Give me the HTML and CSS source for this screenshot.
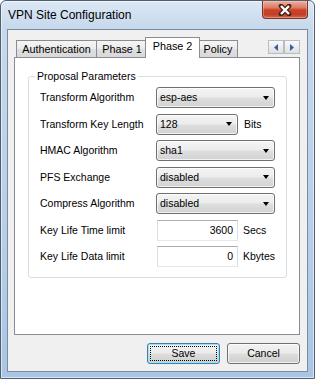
FILE: index.html
```html
<!DOCTYPE html>
<html>
<head>
<meta charset="utf-8">
<title>VPN Site Configuration</title>
<link rel="stylesheet" href="styles.css">
</head>
<body>
<div class="window">
  <div class="titlebar">
    <span class="title">VPN Site Configuration</span>
    <div class="close">
      <svg width="14" height="12" viewBox="0 0 14 12"><path d="M3 2 L11 10 M11 2 L3 10" stroke="#4a2018" stroke-width="4.6" stroke-linecap="round" fill="none"/><path d="M3 2 L11 10 M11 2 L3 10" stroke="#ffffff" stroke-width="2.4" fill="none"/></svg>
    </div>
  </div>
  <div class="client">
    <div class="tabs">
      <div class="tab t-auth">Authentication</div>
      <div class="tab t-p1">Phase 1</div>
      <div class="tab active t-p2">Phase 2</div>
      <div class="tab t-pol">Policy</div>
      <div class="scroller">
        <span class="sbtn"><svg width="4" height="7" viewBox="0 0 4 7"><path d="M4 0 L0 3.5 L4 7 Z" fill="#3a5aa8"/></svg></span>
        <span class="sbtn"><svg width="4" height="7" viewBox="0 0 4 7"><path d="M0 0 L4 3.5 L0 7 Z" fill="#3a5aa8"/></svg></span>
      </div>
    </div>
    <div class="panel">
      <fieldset class="group">
        <legend>Proposal Parameters</legend>
        <div class="grid">
          <span class="lbl">Transform Algorithm</span>
          <div class="ctl"><div class="combo wide"><span>esp-aes</span><i class="arrow"></i></div></div>

          <span class="lbl">Transform Key Length</span>
          <div class="ctl"><div class="combo narrow"><span>128</span><i class="arrow"></i></div><span class="unit u-bits">Bits</span></div>

          <span class="lbl">HMAC Algorithm</span>
          <div class="ctl"><div class="combo wide"><span>sha1</span><i class="arrow"></i></div></div>

          <span class="lbl">PFS Exchange</span>
          <div class="ctl"><div class="combo wide"><span>disabled</span><i class="arrow"></i></div></div>

          <span class="lbl">Compress Algorithm</span>
          <div class="ctl"><div class="combo wide"><span>disabled</span><i class="arrow"></i></div></div>

          <span class="lbl">Key Life Time limit</span>
          <div class="ctl"><div class="edit">3600</div><span class="unit">Secs</span></div>

          <span class="lbl">Key Life Data limit</span>
          <div class="ctl"><div class="edit">0</div><span class="unit">Kbytes</span></div>
        </div>
      </fieldset>
    </div>
    <div class="buttons">
      <button class="btn default">Save</button>
      <button class="btn">Cancel</button>
    </div>
  </div>
</div>
</body>
</html>
```
FILE: styles.css
```css
html, body {
  margin: 0;
  padding: 0;
}
body {
  width: 315px;
  height: 379px;
  overflow: hidden;
  background: #ffffff;
  font-family: "Liberation Sans", Arial, sans-serif;
  font-size: 10.5px;
  color: #000;
}
.window {
  box-sizing: border-box;
  width: 315px;
  height: 379px;
  border: 1px solid #4f5f70;
  border-radius: 6px 6px 0 0;
  background: linear-gradient(180deg, #dbe8f5 0px, #c6d8ec 28px, #b8cfe9 60%, #a9c5e5 100%);
  box-shadow: inset 0 0 0 1px rgba(255, 255, 255, 0.55);
  padding: 0 6px 6px 6px;
  display: flex;
  flex-direction: column;
}
.titlebar {
  height: 28px;
  flex: 0 0 28px;
  display: flex;
  align-items: flex-start;
  padding-left: 1px;
}
.title {
  font-size: 12px;
  line-height: 14px;
  padding-top: 7px;
  color: #000;
}
.close {
  margin-left: auto;
  width: 46px;
  height: 18px;
  box-sizing: border-box;
  border: 1px solid #7a3324;
  border-top: none;
  border-radius: 0 0 4px 4px;
  background: linear-gradient(180deg, #ecb0a0 0%, #dd7a63 40%, #c8432a 52%, #c23f26 80%, #d66a52 100%);
  box-shadow: inset 0 0 0 1px rgba(255, 220, 210, 0.35);
  display: flex;
  align-items: center;
  justify-content: center;
}
.client {
  box-sizing: border-box;
  height: 343px;
  flex: 0 0 343px;
  border: 1px solid #7b8ca0;
  background: #f0f0f0;
  display: flex;
  flex-direction: column;
}
.tabs {
  height: 20px;
  margin: 7px 7px 0 6px;
  padding-left: 2px;
  display: flex;
  align-items: flex-end;
}
.tab {
  box-sizing: border-box;
  height: 17px;
  border: 1px solid #898c95;
  border-bottom: none;
  background: linear-gradient(180deg, #f5f5f5 0%, #ebebeb 50%, #dfdfdf 51%, #d9d9d9 100%);
  display: flex;
  align-items: center;
  justify-content: center;
  font-size: 10.8px;
  line-height: 13px;
  padding-top: 1px;
}
.t-auth { width: 81px; }
.t-p1 { width: 52px; margin-left: -1px; }
.t-p2 { width: 55px; margin-left: -3px; }
.t-pol { width: 40px; margin-left: -2px; }
.tab.active {
  height: 21px;
  margin-bottom: -1px;
  background: #ffffff;
  z-index: 1;
  padding-top: 0;
  padding-bottom: 4px;
}
.scroller {
  margin-left: auto;
  align-self: flex-start;
  margin-top: 3px;
  display: flex;
}
.sbtn {
  box-sizing: border-box;
  width: 16px;
  height: 14px;
  border: 1px solid #b9bcc2;
  background: linear-gradient(180deg, #fafafa 0%, #ececec 50%, #e0e0e0 100%);
  display: flex;
  align-items: center;
  justify-content: center;
}
.panel {
  box-sizing: border-box;
  height: 278px;
  margin: 0 7px 0 6px;
  border: 1px solid #898c95;
  background: #ffffff;
  display: flex;
  flex-direction: column;
}
.group {
  margin: 12px 12px 0 13px;
  padding: 0 11px 10px 11px;
  border: 1px solid #d5dfe5;
  border-radius: 3px;
  min-width: 0;
}
.group legend {
  padding: 0 2px;
  margin-left: -5px;
  line-height: 13px;
}
.grid {
  margin-top: 4px;
  display: grid;
  grid-template-columns: 116px 1fr;
  grid-auto-rows: 21px;
  row-gap: 5.5px;
  align-items: center;
}
.lbl {
  line-height: 13px;
}
.ctl {
  display: flex;
  align-items: center;
  height: 21px;
}
.combo {
  box-sizing: border-box;
  height: 21px;
  border: 1px solid #707070;
  border-radius: 3px;
  background: linear-gradient(180deg, #f4f4f4 0%, #ececec 48%, #dedede 52%, #d2d2d2 100%);
  box-shadow: inset 0 0 0 1px rgba(255, 255, 255, 0.7);
  display: flex;
  align-items: center;
  justify-content: space-between;
  padding: 0 5px 0 3px;
  line-height: 13px;
}
.combo.wide { width: 119px; }
.combo.narrow { width: 82px; }
.arrow {
  width: 0;
  height: 0;
  border-left: 3.5px solid transparent;
  border-right: 3.5px solid transparent;
  border-top: 4px solid #000;
}
.unit {
  margin-left: 5px;
  line-height: 13px;
}
.u-bits { margin-left: 6px; }
.edit {
  box-sizing: border-box;
  width: 81px;
  height: 21px;
  margin-left: 1px;
  border: 1px solid #e2e3ea;
  border-top-color: #abadb3;
  border-left-color: #dbdfe6;
  border-right-color: #dbdfe6;
  border-bottom-color: #e3e9ef;
  background: #ffffff;
  text-align: right;
  padding-right: 4px;
  line-height: 19px;
}
.buttons {
  margin: 8px 7px 0 0;
  display: flex;
  justify-content: flex-end;
  gap: 7px;
}
.btn {
  box-sizing: border-box;
  width: 73px;
  height: 21px;
  margin: 0;
  padding: 0;
  border: 1px solid #707070;
  border-radius: 3px;
  background: linear-gradient(180deg, #f2f2f2 0%, #ebebeb 48%, #dddddd 52%, #cfcfcf 100%);
  box-shadow: inset 0 0 0 1px rgba(255, 255, 255, 0.7);
  font-family: "Liberation Sans", Arial, sans-serif;
  font-size: 10.5px;
  color: #000;
  line-height: 13px;
}
.btn.default {
  border-color: #3c7fb1;
  box-shadow: inset 0 0 0 1px #9fe2f8;
  outline: 1px dotted #000;
  outline-offset: -4px;
}
```
